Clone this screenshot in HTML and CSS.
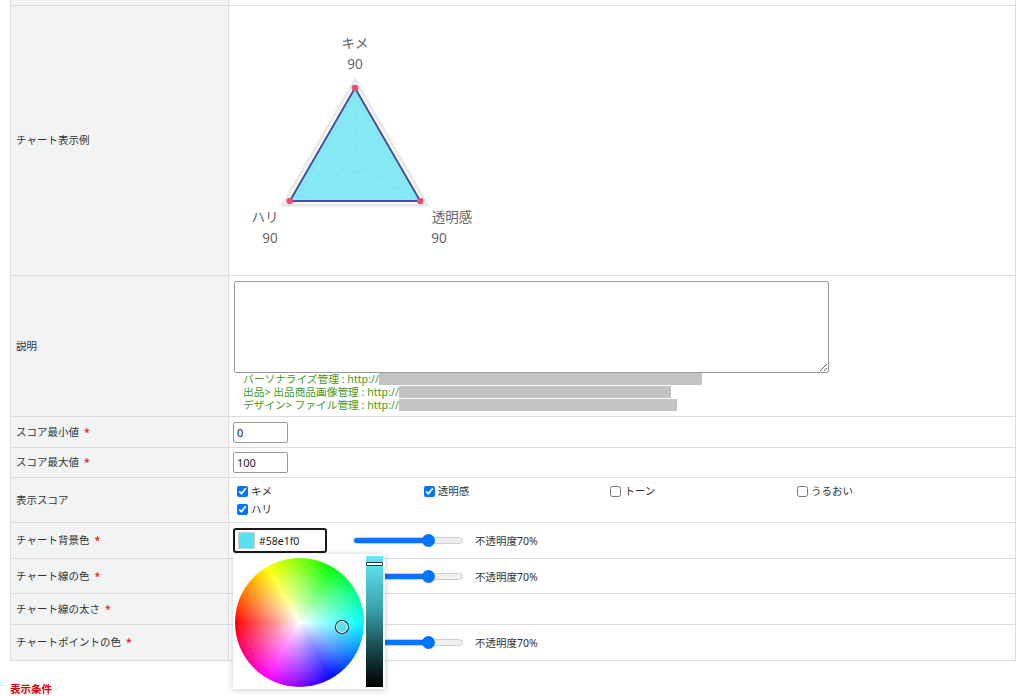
FILE: index.html
```html
<!DOCTYPE html>
<html lang="ja">
<head>
<meta charset="utf-8">
<title>チャート設定</title>
<link rel="stylesheet" href="styles.css">
</head>
<body>
<div class="page">
  <div class="form">
    <div class="row r-top">
      <div class="lbl"></div>
      <div class="val"><input class="txt top-input" type="text"></div>
    </div>

    <div class="row r-chart">
      <div class="lbl">チャート表示例</div>
      <div class="val">
        <svg class="chart" width="260" height="269" viewBox="0 0 260 269">
          <g fill="none" stroke="#e6e6e6" stroke-width="1">
            <polygon points="126,140.6 140.5,165.7 111.5,165.7"/>
            <polygon points="126,123.8 155,174 97,174"/>
            <polygon points="126,107.1 169.5,182.4 82.5,182.4"/>
            <polygon points="126,90.3 184,190.8 68,190.8"/>
            <line x1="126" y1="157.3" x2="126" y2="73.6"/>
            <line x1="126" y1="157.3" x2="198.5" y2="199.2"/>
            <line x1="126" y1="157.3" x2="53.5" y2="199.2"/>
          </g>
          <polygon points="126,73.6 198.5,199.2 53.5,199.2" fill="none" stroke="#f4f4f4" stroke-width="4"/>
          <polygon points="126,73.6 198.5,199.2 53.5,199.2" fill="none" stroke="#dcdcdc" stroke-width="1"/>
          <polygon points="126,82 191.2,195 60.8,195" fill="rgba(88,225,240,0.72)" stroke="#4a4f9c" stroke-width="2" stroke-linejoin="miter"/>
          <g fill="#e84e78">
            <circle cx="126" cy="82" r="3.3"/>
            <circle cx="191.2" cy="195" r="3.3"/>
            <circle cx="60.8" cy="195" r="3.3"/>
          </g>
          <g class="axis-txt" fill="#666">
            <text x="126" y="42" text-anchor="middle">キメ</text>
            <text x="126" y="63" text-anchor="middle">90</text>
            <text x="36" y="216" text-anchor="middle">ハリ</text>
            <text x="41" y="237" text-anchor="middle">90</text>
            <text x="223" y="216" text-anchor="middle">透明感</text>
            <text x="210" y="237" text-anchor="middle">90</text>
          </g>
        </svg>
      </div>
    </div>

    <div class="row r-desc">
      <div class="lbl">説明</div>
      <div class="val col">
        <textarea class="desc"></textarea>
        <div class="help">
          <div>パーソナライズ管理 : http://<span class="mask m1"></span></div>
          <div>出品&gt; 出品商品画像管理 : http://<span class="mask m2"></span></div>
          <div>デザイン&gt; ファイル管理 : http://<span class="mask m3"></span></div>
        </div>
      </div>
    </div>

    <div class="row r-min">
      <div class="lbl">スコア最小値<span class="req">*</span></div>
      <div class="val"><input class="txt num" type="text" value="0"></div>
    </div>

    <div class="row r-max">
      <div class="lbl">スコア最大値<span class="req">*</span></div>
      <div class="val"><input class="txt num" type="text" value="100"></div>
    </div>

    <div class="row r-score">
      <div class="lbl">表示スコア</div>
      <div class="val">
        <div class="checks">
          <label class="chk"><input type="checkbox" checked>キメ</label>
          <label class="chk"><input type="checkbox" checked>透明感</label>
          <label class="chk"><input type="checkbox">トーン</label>
          <label class="chk"><input type="checkbox">うるおい</label>
          <label class="chk"><input type="checkbox" checked>ハリ</label>
        </div>
      </div>
    </div>

    <div class="row r-bg">
      <div class="lbl">チャート背景色<span class="req">*</span></div>
      <div class="val">
        <div class="colorfield focused">
          <span class="swatch"></span><span class="hex">#58e1f0</span>
          <div class="picker">
            <div class="wheel"><span class="wheel-dot"></span></div>
            <div class="vbar"><span class="vbar-mark"></span></div>
          </div>
        </div>
        <div class="slider"><span class="thumb"></span></div>
        <span class="opacity">不透明度70%</span>
      </div>
    </div>

    <div class="row r-line">
      <div class="lbl">チャート線の色<span class="req">*</span></div>
      <div class="val">
        <div class="colorfield">
          <span class="swatch navy"></span><span class="hex">#4a4f9c</span>
        </div>
        <div class="slider"><span class="thumb"></span></div>
        <span class="opacity">不透明度70%</span>
      </div>
    </div>

    <div class="row r-thick">
      <div class="lbl">チャート線の太さ<span class="req">*</span></div>
      <div class="val"></div>
    </div>

    <div class="row r-point">
      <div class="lbl">チャートポイントの色<span class="req">*</span></div>
      <div class="val">
        <div class="colorfield">
          <span class="swatch pink"></span><span class="hex">#e84e78</span>
        </div>
        <div class="slider"><span class="thumb"></span></div>
        <span class="opacity">不透明度70%</span>
      </div>
    </div>
  </div>

  <h3 class="section">表示条件</h3>
</div>
</body>
</html>
```

FILE: styles.css
```css
* { box-sizing: border-box; }

html, body {
  margin: 0;
  padding: 0;
  background: #fff;
}

body {
  font-family: "Noto Sans", "Noto Sans CJK JP", sans-serif;
  font-size: 10.5px;
  color: #333;
}

.page {
  width: 1024px;
  padding: 0 8px 0 10px;
}

.form {
  margin-top: -26px;
  border-left: 1px solid #dcdcdc;
  border-right: 1px solid #dcdcdc;
}

.row {
  display: grid;
  grid-template-columns: 218px 1fr;
  border-bottom: 1px solid #dcdcdc;
}

.lbl {
  background: #f2f3f3;
  border-right: 1px solid #dcdcdc;
  padding-left: 5px;
  display: flex;
  align-items: center;
  line-height: 1.2;
}

.req {
  color: #e60012;
  margin-left: 5px;
}

.val {
  display: flex;
  align-items: center;
  padding-left: 4px;
}

.val.col {
  flex-direction: column;
  align-items: flex-start;
  justify-content: flex-start;
  padding-top: 5px;
  padding-left: 5px;
}

.r-top { height: 32px; }
.r-chart { height: 270px; }
.r-desc { height: 141px; }
.r-min { height: 31px; }
.r-max { height: 30px; }
.r-score { height: 45px; }
.r-bg { height: 36px; }
.r-line { height: 35px; }
.r-thick { height: 31px; }
.r-point { height: 36px; }

.r-chart .val { align-items: flex-start; padding-left: 0; }
.chart { display: block; }
.axis-txt text {
  font-family: "Noto Sans", "Noto Sans CJK JP", sans-serif;
  font-size: 13.5px;
}

.txt {
  font-family: "Noto Sans", "Noto Sans CJK JP", sans-serif;
  font-size: 11px;
  color: #222;
  border: 1px solid #9a9a9a;
  border-radius: 2px;
  background: #fff;
  padding: 0 3px;
  outline: none;
}

.top-input {
  width: 104px;
  height: 22px;
  margin-top: 4px;
  margin-left: 1px;
  align-self: flex-start;
  border-color: #8a8a8a;
  border-bottom-width: 2px;
}

.num {
  width: 55px;
  height: 21px;
}

.desc {
  display: block;
  width: 595px;
  height: 92px;
  border: 1px solid #9a9a9a;
  border-radius: 2px;
  margin: 0;
  resize: vertical;
  font-family: inherit;
}

.help {
  padding-left: 9px;
  color: #3f9a20;
  font-size: 10.7px;
  line-height: 13px;
}

.help div { white-space: nowrap; }

.mask {
  display: inline-block;
  vertical-align: middle;
  height: 12px;
  background: #c3c3c3;
  margin-top: -2px;
}
.m1 { width: 323px; }
.m2 { width: 272px; }
.m3 { width: 278px; }

.r-score .val { align-items: flex-start; padding-left: 0; }

.checks {
  display: grid;
  grid-template-columns: repeat(4, 186.7px);
  padding-top: 4px;
  padding-left: 4px;
  line-height: 18px;
}

.chk {
  display: flex;
  align-items: center;
  height: 18px;
  color: #333;
}

.chk input {
  width: 11px;
  height: 11px;
  margin: 0 3px 0 4px;
}

.colorfield {
  position: relative;
  width: 94px;
  height: 25px;
  border: 1px solid #9a9a9a;
  border-radius: 3px;
  display: flex;
  align-items: center;
  padding-left: 4px;
  font-size: 10.5px;
  color: #222;
}

.colorfield.focused {
  border: 2px solid #1a1a1a;
  padding-left: 3px;
}

.swatch {
  width: 17px;
  height: 17px;
  background: #58e1f0;
  border: 1px solid #cfcfcf;
  margin-right: 4px;
}
.swatch.navy { background: #4a4f9c; }
.swatch.pink { background: #e84e78; }

.picker {
  position: absolute;
  left: -2px;
  top: 24px;
  z-index: 10;
  width: 152px;
  height: 135px;
  background: #fff;
  box-shadow: 0 1px 6px rgba(0, 0, 0, 0.22);
  display: flex;
  align-items: flex-start;
  padding: 2px;
}

.wheel {
  position: relative;
  width: 129px;
  height: 129px;
  margin-top: 2px;
  border-radius: 50%;
  background:
    radial-gradient(closest-side, #fff 0%, rgba(255, 255, 255, 0.6) 35%, rgba(255, 255, 255, 0) 100%),
    conic-gradient(#80ff00 0deg, #00ff00 30deg, #00ff80 60deg, #00ffff 90deg, #0080ff 120deg, #0000ff 150deg, #8000ff 180deg, #ff00ff 210deg, #ff0080 240deg, #ff0000 270deg, #ff8000 300deg, #ffff00 330deg, #80ff00 360deg);
}

.wheel-dot {
  position: absolute;
  left: 101px;
  top: 63px;
  width: 12px;
  height: 12px;
  border-radius: 50%;
  background: #58e1f0;
  border: 1.5px solid #fff;
  box-shadow: 0 0 0 1px #222;
}

.vbar {
  position: relative;
  width: 17px;
  height: 131px;
  margin-left: 2px;
  background: linear-gradient(#62ecfa 0%, #3aa2ad 40%, #1a4a50 70%, #000 100%);
}

.vbar-mark {
  position: absolute;
  left: 0;
  right: 0;
  top: 6px;
  height: 4px;
  background: #fff;
  border: 1px solid #333;
  border-radius: 1px;
}

.slider {
  position: relative;
  width: 110px;
  height: 7px;
  margin-left: 26px;
  border-radius: 4px;
  border: 1px solid #cfcfcf;
  background: linear-gradient(to right, #0075ff 0, #0075ff 68%, #efefef 68%);
}

.thumb {
  position: absolute;
  left: 68px;
  top: -4px;
  width: 13px;
  height: 13px;
  border-radius: 50%;
  background: #0075ff;
}

.opacity {
  margin-left: 12px;
  color: #333;
}

.section {
  margin: 22px 0 0 0;
  font-size: 10.5px;
  font-weight: bold;
  color: #d40000;
  line-height: 12px;
}
```
